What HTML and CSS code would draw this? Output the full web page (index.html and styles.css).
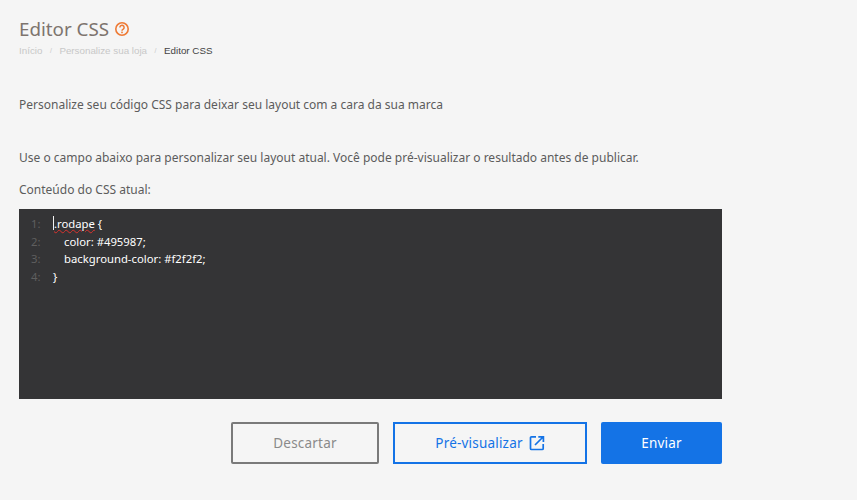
FILE: index.html
```html
<!DOCTYPE html>
<html lang="pt-BR">
  <head>
    <meta charset="UTF-8" />
    <title>Editor CSS</title>
    <link rel="stylesheet" href="styles.css">
  </head>
  <body>
    <div class="page">
      <div class="title-row">
        <h1>Editor CSS</h1>
        <svg class="help" width="16" height="16" viewBox="0 0 16 16" fill="none">
          <circle cx="8" cy="8" r="6.2" stroke="#ee7a35" stroke-width="1.6"/>
          <path d="M5.9 6.4a2.1 2.1 0 1 1 3.3 1.7c-.8.5-1.2.9-1.2 1.7" stroke="#ee7a35" stroke-width="1.5"/>
          <rect x="7.2" y="10.6" width="1.6" height="1.6" fill="#ee7a35"/>
        </svg>
      </div>

      <ul class="breadcrumb">
        <li>Início</li>
        <li class="sep">/</li>
        <li>Personalize sua loja</li>
        <li class="sep">/</li>
        <li class="current">Editor CSS</li>
      </ul>

      <p class="intro">Personalize seu código CSS para deixar seu layout com a cara da sua marca</p>
      <p class="use">Use o campo abaixo para personalizar seu layout atual. Você pode pré-visualizar o resultado antes de publicar.</p>
      <p class="label">Conteúdo do CSS atual:</p>

      <div class="editor">
        <div class="line"><span class="num">1:</span><span class="code"><span class="cursor"></span><span class="typo">.rodape</span> {</span></div>
        <div class="line"><span class="num">2:</span><span class="code indent">color: #495987;</span></div>
        <div class="line"><span class="num">3:</span><span class="code indent">background-color: #f2f2f2;</span></div>
        <div class="line"><span class="num">4:</span><span class="code">}</span></div>
      </div>

      <div class="actions">
        <button class="btn btn-discard">Descartar</button>
        <button class="btn btn-preview">Pré-visualizar
          <svg width="16" height="16" viewBox="0 0 16 16" fill="none">
            <path d="M7 1.800H2.500a1 1 0 0 0-1 1v10.700a1 1 0 0 0 1 1H13.200a1 1 0 0 0 1-1V9" stroke="#1473e6" stroke-width="1.700"/>
            <path d="M6 10 13.500 2.500M9.300 1.800h5.100v5.100" stroke="#1473e6" stroke-width="1.700"/>
          </svg>
        </button>
        <button class="btn btn-send">Enviar</button>
      </div>
    </div>
  </body>
</html>
```

FILE: styles.css
```css
* {
  padding: 0;
  margin: 0;
  box-sizing: border-box;
}
body {
  background-color: #f5f5f5;
  font-family: "Noto Sans", "Open Sans", sans-serif;
  color: #5c5c5c;
  overflow: hidden;
}
.page {
  width: 703px;
  margin-left: 19px;
  padding-top: 17px;
}
.title-row {
  display: flex;
  align-items: center;
  gap: 6px;
  height: 24px;
}
h1 {
  font-size: 18.800px;
  font-weight: 400;
  color: #7d746e;
  line-height: 24px;
}
.help {
  margin-left: -1px;
}
.breadcrumb {
  display: flex;
  list-style: none;
  gap: 7.500px;
  margin-top: 4px;
  font-family: "Liberation Sans", sans-serif;
  font-size: 9.800px;
  line-height: 12px;
  color: #c8c8c8;
}
.breadcrumb .sep {
  font-size: 7px;
}
.breadcrumb .current {
  color: #444;
}
p {
  font-size: 12px;
  line-height: 18px;
}
.intro {
  margin-top: 39px;
}
.use {
  margin-top: 35px;
}
.label {
  margin-top: 14px;
}
.editor {
  height: 190px;
  margin-top: 10px;
  padding-top: 6px;
  background-color: #343436;
  font-size: 11.300px;
  color: #fff;
}
.line {
  display: flex;
  height: 17.600px;
  line-height: 17.600px;
}
.num {
  width: 34px;
  padding-left: 12px;
  color: #5f5f5f;
}
.indent {
  padding-left: 11px;
}
.cursor {
  display: inline-block;
  width: 1px;
  height: 14px;
  margin-bottom: -2px;
  background-color: #f2f2f2;
}
.typo {
  text-decoration: underline wavy #d8322e 1px;
}
.actions {
  display: flex;
  justify-content: flex-end;
  gap: 14px;
  margin-top: 23px;
}
.btn {
  height: 42px;
  font-family: "Noto Sans", sans-serif;
  font-size: 13.500px;
  letter-spacing: 0.2px;
  border-radius: 2px;
  background: none;
  display: flex;
  align-items: center;
  justify-content: center;
  gap: 6px;
}
.btn-discard {
  width: 148px;
  border: 2px solid #7a7a7a;
  color: #8a8a8a;
}
.btn-preview {
  width: 194px;
  border: 2px solid #1473e6;
  border-radius: 0;
  color: #1473e6;
}
.btn-send {
  width: 121px;
  border: none;
  background-color: #1473e6;
  color: #fff;
}
```
